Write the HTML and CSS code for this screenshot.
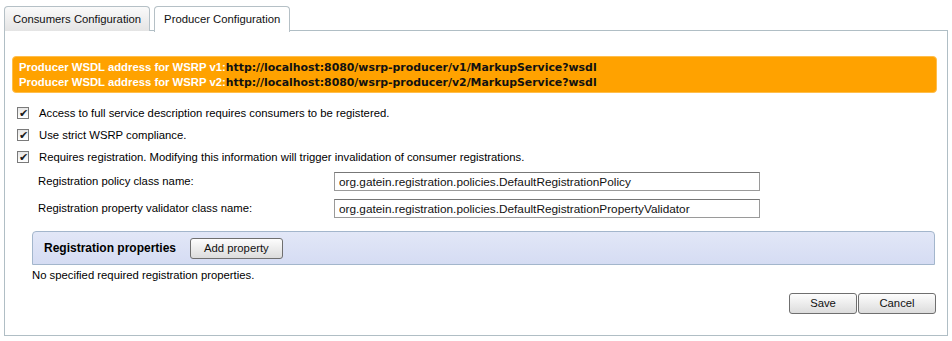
FILE: index.html
```html
<!DOCTYPE html>
<html lang="en">
<head>
    <meta charset="UTF-8">
    <title>WSRP Configuration</title>
    <link rel="stylesheet" href="styles.css">
</head>
<body>
    <div class="tabs">
        <span class="tab">Consumers Configuration</span>
        <span class="tab active">Producer Configuration</span>
    </div>
    <div class="panel">
        <div class="wsdl">
            <p><b>Producer WSDL address for WSRP v1:</b><span>http://localhost:8080/wsrp-producer/v1/MarkupService?wsdl</span></p>
            <p><b>Producer WSDL address for WSRP v2:</b><span>http://localhost:8080/wsrp-producer/v2/MarkupService?wsdl</span></p>
        </div>
        <div class="checks">
            <div class="check"><span class="box">&#10004;</span>Access to full service description requires consumers to be registered.</div>
            <div class="check"><span class="box">&#10004;</span>Use strict WSRP compliance.</div>
            <div class="check"><span class="box">&#10004;</span>Requires registration. Modifying this information will trigger invalidation of consumer registrations.</div>
        </div>
        <div class="field">
            <label>Registration policy class name:</label>
            <input type="text" value="org.gatein.registration.policies.DefaultRegistrationPolicy">
        </div>
        <div class="field">
            <label>Registration property validator class name:</label>
            <input type="text" value="org.gatein.registration.policies.DefaultRegistrationPropertyValidator">
        </div>
        <div class="props">
            <div class="propsHead">
                <b>Registration properties</b>
                <span class="btn">Add property</span>
            </div>
            <p class="none">No specified required registration properties.</p>
        </div>
        <div class="actions">
            <span class="btn wide">Save</span><span class="btn wide">Cancel</span>
        </div>
    </div>
</body>
</html>
```
FILE: styles.css
```css
*{
    margin:0;
    padding:0;
    box-sizing:border-box;
}
body{
    padding:6px 4px 0 4px;
    font-family:"Liberation Sans", Arial, sans-serif;
    font-size:11.3px;
    line-height:13px;
    color:#000;
    background:#fff;
}
.tabs{
    display:flex;
    gap:4px;
    height:25px;
    position:relative;
    z-index:1;
}
.tab{
    display:inline-block;
    height:25px;
    line-height:24px;
    padding:0 8px;
    border:1px solid #b5c0c6;
    border-bottom:none;
    border-radius:4px 4px 0 0;
    background:linear-gradient(#fafafa,#e4e4e4);
    color:#111;
}
.tab.active{
    height:26px;
    padding:0 9px;
    background:#fff;
}
.panel{
    border:1px solid #b0bec5;
    margin-top:-1px;
    width:944px;
    height:306px;
    padding:25px 0 0 7px;
}
.wsdl{
    width:925px;
    background:#ffa200;
    border:1px solid #ffbe4c;
    border-radius:4px;
    padding:3px 6px 2px 6px;
    font-weight:bold;
    line-height:14px;
}
.wsdl b{
    color:#fff;
}
.wsdl span{
    font-family:"DejaVu Sans", Verdana, sans-serif;
    font-size:10.9px;
    color:#111;
}
.checks{
    margin-top:9px;
}
.check{
    display:flex;
    align-items:center;
    height:22px;
    margin-left:5px;
}
.box{
    display:inline-block;
    width:12px;
    height:12px;
    border:1px solid #7a7a7a;
    background:linear-gradient(#e6e6e6,#fff);
    font-size:11px;
    line-height:11px;
    text-align:center;
    color:#1a1a1a;
    margin-right:10px;
}
.field{
    display:flex;
    align-items:center;
    height:27px;
    margin-left:26px;
}
.field label{
    width:296px;
}
.field input{
    width:426px;
    height:19px;
    border:1px solid #9a9a9a;
    border-top-color:#777;
    padding:0 4px;
    font-family:"Liberation Sans", Arial, sans-serif;
    font-size:11.8px;
    color:#111;
}
.props{
    margin:9px 0 0 20px;
}
.propsHead{
    display:flex;
    align-items:center;
    gap:14px;
    width:903px;
    height:34px;
    padding:0 11px;
    border:1px solid #a3b6cc;
    border-radius:4px 4px 0 0;
    background:linear-gradient(#e2e7f7,#d5dcf3);
}
.propsHead b{
    font-size:12px;
}
.btn{
    display:inline-block;
    height:21px;
    line-height:19px;
    padding:0 13px;
    border:1px solid #6f6f6f;
    border-radius:3px;
    background:linear-gradient(#fdfdfd,#dcdcdc);
    text-align:center;
    color:#111;
}
.none{
    margin-top:4px;
}
.actions{
    display:flex;
    justify-content:flex-end;
    gap:1px;
    width:924px;
    margin-top:11px;
}
.btn.wide{
    width:68px;
}
.btn.wide + .btn.wide{
    width:78px;
}
```
